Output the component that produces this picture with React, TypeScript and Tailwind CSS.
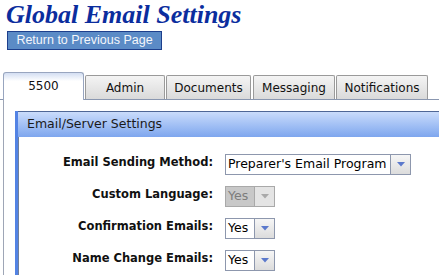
import React from "react";

const font = { fontFamily: '"DejaVu Sans", Verdana, sans-serif' };

function Arrow({ disabled }: { disabled?: boolean }) {
  return (
    <svg width="8" height="5" viewBox="0 0 8 5">
      <path d="M0 0 H8 L4 4.5 Z" fill={disabled ? "#a9a9a9" : "#5b79cc"} />
    </svg>
  );
}

function Select({ value, width, disabled }: { value: string; width: string; disabled?: boolean }) {
  return (
    <div
      className={`flex h-[21px] border ${disabled ? "border-[#a9a9a9]" : "border-[#8d97ad]"} ${width}`}
    >
      <div
        className={`flex-1 flex items-center pl-[2px] text-[12.5px] leading-none ${
          disabled ? "bg-[#c8c8c8] text-[#7c7c7c]" : "bg-white text-black"
        }`}
      >
        {value}
      </div>
      <div
        className={`w-[20px] flex items-center justify-center border-l ${
          disabled ? "border-[#a9a9a9] bg-[#e4e4e4]" : "border-[#8d97ad] bg-linear-to-b from-[#f6f6f6] to-[#dcdcdc]"
        }`}
      >
        <Arrow disabled={disabled} />
      </div>
    </div>
  );
}

function Row({ label, children }: { label: string; children: React.ReactNode }) {
  return (
    <div className="flex items-start h-[21px]">
      <div className="w-[194px] text-right font-bold text-[11.5px] leading-[14px] text-[#111] pt-[1px]">{label}</div>
      <div className="ml-[12px]">{children}</div>
    </div>
  );
}

export default function App() {
  return (
    <div className="w-[439px] h-[275px] overflow-hidden bg-white" style={font}>
      <div className="pt-[1px] pl-[6px] flex">
        <h1
          className="text-[26px] leading-[28px] font-bold italic text-[#0b2d9e]"
          style={{ fontFamily: '"Liberation Serif", "Times New Roman", serif' }}
        >
          Global Email Settings
        </h1>
      </div>
      <div className="pl-[7px] mt-[2px] flex">
        <button
          className="w-[155px] h-[19px] bg-[#5b8bc6] border border-[#1d3f8c] text-[#f4f6fb] text-[12.5px] leading-none flex items-center justify-center"
          style={{ fontFamily: '"Liberation Sans", Arial, sans-serif' }}
        >
          Return to Previous Page
        </button>
      </div>

      <div className="mt-[22px] flex items-end pl-[3px] border-b border-[#8a97b0] text-[12px] text-[#111]">
        <div className="w-[81px] h-[28px] -mb-px border border-b-0 border-[#98a5bf] rounded-t-[3px] bg-linear-to-b from-[#d3def2] via-white via-30% to-white flex items-center justify-center pb-[2px]">
          5500
        </div>
        <div className="ml-[1px] w-[80px] h-[24px] border border-b-0 border-[#9a9a9a] rounded-t-[2px] bg-linear-to-b from-[#f4f4f4] to-[#dadada] flex items-center justify-center">
          Admin
        </div>
        <div className="ml-[1px] w-[85px] h-[24px] border border-b-0 border-[#9a9a9a] rounded-t-[2px] bg-linear-to-b from-[#f4f4f4] to-[#dadada] flex items-center justify-center">
          Documents
        </div>
        <div className="ml-[2px] w-[82px] h-[24px] border border-b-0 border-[#9a9a9a] rounded-t-[2px] bg-linear-to-b from-[#f4f4f4] to-[#dadada] flex items-center justify-center">
          Messaging
        </div>
        <div className="ml-[1px] w-[92px] h-[24px] border border-b-0 border-[#9a9a9a] rounded-t-[2px] bg-linear-to-b from-[#f4f4f4] to-[#dadada] flex items-center justify-center">
          Notifications
        </div>
      </div>

      <div className="ml-[3px] border-l border-[#9ea6b6] pl-[11px] pt-[11px] h-[200px]">
        <div className="border-l-[3px] border-[#5383e4] h-full">
          <div className="h-[26px] border-t border-[#4f6796] bg-linear-to-b from-[#cadcfb] to-[#7ea6ee] flex items-center pl-[9px] text-[12.5px] text-[#1a1a1a]">
            Email/Server Settings
          </div>
          <div className="border-l border-[#6f7f9c] h-full pt-[17px] flex flex-col gap-[11px]">
            <Row label="Email Sending Method:">
              <Select value="Preparer's Email Program" width="w-[186px]" />
            </Row>
            <Row label="Custom Language:">
              <Select value="Yes" width="w-[50px]" disabled />
            </Row>
            <Row label="Confirmation Emails:">
              <Select value="Yes" width="w-[50px]" />
            </Row>
            <Row label="Name Change Emails:">
              <Select value="Yes" width="w-[50px]" />
            </Row>
          </div>
        </div>
      </div>
    </div>
  );
}
